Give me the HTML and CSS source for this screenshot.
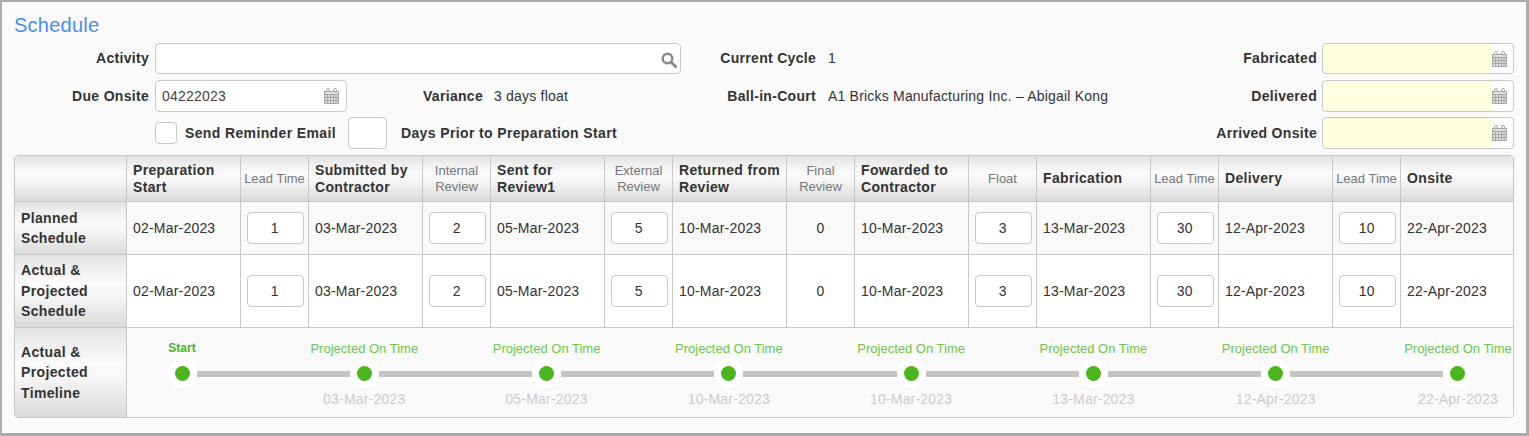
FILE: index.html
```html
<!DOCTYPE html>
<html lang="en">
<head>
    <meta charset="UTF-8">
    <meta name="viewport" content="width=device-width, initial-scale=1.0">
    <title>Schedule</title>
    <link rel="stylesheet" href="styles.css">
</head>
<body>
    <svg class="icon-defs" width="0" height="0">
        <symbol id="calendar" viewBox="0 0 15 16">
            <path d="M2.5 3V1.8a1.4 1.4 0 0 1 2.8 0V3M9.7 3V1.8a1.4 1.4 0 0 1 2.8 0V3" fill="none" stroke="currentColor" stroke-width="1"/>
            <path d="M0 3h15v13H0z" fill="currentColor" opacity="0.35"/>
            <path d="M0.5 3.5h14v12h-14zM0.5 6.5h14M0.5 9.5h14M0.5 12.5h14M3.5 6.5v9M6.5 6.5v9M9.5 6.5v9M12 6.5v9" fill="none" stroke="currentColor" stroke-width="1"/>
        </symbol>
    </svg>

    <div class="panel">
        <h1>Schedule</h1>

        <form class="form-grid">
            <!-- Row 1 -->
            <label class="field-label first-row">Activity</label>
            <div class="input-box activity">
                <svg class="search-icon" viewBox="0 0 16 16"><circle cx="6.5" cy="6.5" r="4.8" fill="none" stroke="currentColor" stroke-width="2.4"/><path d="M10 10l4.5 4.5" stroke="currentColor" stroke-width="3" stroke-linecap="round"/></svg>
            </div>
            <label class="field-label label-wide first-row">Current Cycle</label>
            <span class="field-value first-row">1</span>
            <label class="field-label label-tight first-row">Fabricated</label>
            <div class="input-box date-pending first-box"><svg class="cal-icon"><use href="#calendar"/></svg></div>

            <!-- Row 2 -->
            <label class="field-label">Due Onsite</label>
            <div class="input-box">
                <span class="input-text">04222023</span>
                <svg class="cal-icon"><use href="#calendar"/></svg>
            </div>
            <label class="field-label label-mid">Variance</label>
            <span class="field-value">3 days float</span>
            <label class="field-label label-wide">Ball-in-Court</label>
            <span class="field-value">A1 Bricks Manufacturing Inc. – Abigail Kong</span>
            <label class="field-label label-tight">Delivered</label>
            <div class="input-box date-pending"><svg class="cal-icon"><use href="#calendar"/></svg></div>

            <!-- Row 3 -->
            <div class="reminder">
                <span class="checkbox"></span>
                <label class="reminder-label">Send Reminder Email</label>
                <span class="days-box"></span>
                <label class="reminder-label">Days Prior to Preparation Start</label>
            </div>
            <label class="field-label label-tight">Arrived Onsite</label>
            <div class="input-box date-pending"><svg class="cal-icon"><use href="#calendar"/></svg></div>
        </form>

        <div class="table-wrap">
            <table class="schedule">
                <colgroup>
                    <col class="col-head">
                    <col class="col-date"><col class="col-lead">
                    <col class="col-date"><col class="col-lead">
                    <col class="col-date"><col class="col-lead">
                    <col class="col-date"><col class="col-lead">
                    <col class="col-date"><col class="col-lead">
                    <col class="col-date"><col class="col-lead">
                    <col class="col-date"><col class="col-lead">
                    <col class="col-last">
                </colgroup>
                <thead>
                    <tr>
                        <th></th>
                        <th>Preparation Start</th>
                        <th class="sub">Lead Time</th>
                        <th>Submitted by Contractor</th>
                        <th class="sub">Internal Review</th>
                        <th>Sent for Review1</th>
                        <th class="sub">External Review</th>
                        <th>Returned from Review</th>
                        <th class="sub">Final Review</th>
                        <th>Fowarded to Contractor</th>
                        <th class="sub">Float</th>
                        <th>Fabrication</th>
                        <th class="sub">Lead Time</th>
                        <th>Delivery</th>
                        <th class="sub">Lead Time</th>
                        <th>Onsite</th>
                    </tr>
                </thead>
                <tbody>
                    <tr class="row-planned">
                        <th class="row-head">Planned Schedule</th>
                        <td>02-Mar-2023</td>
                        <td class="num"><span class="num-box">1</span></td>
                        <td>03-Mar-2023</td>
                        <td class="num"><span class="num-box">2</span></td>
                        <td>05-Mar-2023</td>
                        <td class="num"><span class="num-box">5</span></td>
                        <td>10-Mar-2023</td>
                        <td class="num">0</td>
                        <td>10-Mar-2023</td>
                        <td class="num"><span class="num-box">3</span></td>
                        <td>13-Mar-2023</td>
                        <td class="num"><span class="num-box">30</span></td>
                        <td>12-Apr-2023</td>
                        <td class="num"><span class="num-box">10</span></td>
                        <td>22-Apr-2023</td>
                    </tr>
                    <tr class="row-actual">
                        <th class="row-head">Actual &amp; Projected Schedule</th>
                        <td>02-Mar-2023</td>
                        <td class="num"><span class="num-box">1</span></td>
                        <td>03-Mar-2023</td>
                        <td class="num"><span class="num-box">2</span></td>
                        <td>05-Mar-2023</td>
                        <td class="num"><span class="num-box">5</span></td>
                        <td>10-Mar-2023</td>
                        <td class="num">0</td>
                        <td>10-Mar-2023</td>
                        <td class="num"><span class="num-box">3</span></td>
                        <td>13-Mar-2023</td>
                        <td class="num"><span class="num-box">30</span></td>
                        <td>12-Apr-2023</td>
                        <td class="num"><span class="num-box">10</span></td>
                        <td>22-Apr-2023</td>
                    </tr>
                    <tr class="row-timeline">
                        <th class="row-head">Actual &amp; Projected Timeline</th>
                        <td colspan="15" class="timeline-cell">
                            <div class="timeline">
                                <div class="stop">
                                    <span class="stop-label start">Start</span>
                                    <span class="stop-dot"><i></i></span>
                                    <span class="stop-date"></span>
                                </div>
                                <div class="stop">
                                    <span class="stop-label">Projected On Time</span>
                                    <span class="stop-dot"><i></i></span>
                                    <span class="stop-date">03-Mar-2023</span>
                                </div>
                                <div class="stop">
                                    <span class="stop-label">Projected On Time</span>
                                    <span class="stop-dot"><i></i></span>
                                    <span class="stop-date">05-Mar-2023</span>
                                </div>
                                <div class="stop">
                                    <span class="stop-label">Projected On Time</span>
                                    <span class="stop-dot"><i></i></span>
                                    <span class="stop-date">10-Mar-2023</span>
                                </div>
                                <div class="stop">
                                    <span class="stop-label">Projected On Time</span>
                                    <span class="stop-dot"><i></i></span>
                                    <span class="stop-date">10-Mar-2023</span>
                                </div>
                                <div class="stop">
                                    <span class="stop-label">Projected On Time</span>
                                    <span class="stop-dot"><i></i></span>
                                    <span class="stop-date">13-Mar-2023</span>
                                </div>
                                <div class="stop">
                                    <span class="stop-label">Projected On Time</span>
                                    <span class="stop-dot"><i></i></span>
                                    <span class="stop-date">12-Apr-2023</span>
                                </div>
                                <div class="stop">
                                    <span class="stop-label">Projected On Time</span>
                                    <span class="stop-dot"><i></i></span>
                                    <span class="stop-date">22-Apr-2023</span>
                                </div>
                            </div>
                        </td>
                    </tr>
                </tbody>
            </table>
        </div>
    </div>
</body>
</html>
```

FILE: styles.css
```css
* {
    box-sizing: border-box;
}

html, body {
    margin: 0;
    padding: 0;
}

body {
    font-family: "Liberation Sans", Arial, sans-serif;
    font-size: 14px;
    letter-spacing: 0.2px;
    color: #333;
    overflow: hidden;
}

.icon-defs {
    position: absolute;
}

.panel {
    height: 436px;
    background-color: #fafafa;
    border: solid #ababab;
    border-width: 2px 3px 3px 2px;
    padding: 0 12px;
}

h1 {
    margin: 0;
    height: 41px;
    padding-top: 12px;
    font-size: 20px;
    line-height: 23px;
    font-weight: normal;
    letter-spacing: 0.25px;
    color: #4a8ef5;
}

/* top form */
.form-grid {
    display: grid;
    grid-template-columns: 141px 192px 147px 187px 147px 1fr 114px 192px;
    grid-template-rows: 32px 32px 32px;
    row-gap: 5px;
    align-items: center;
}

.field-label {
    font-weight: bold;
    letter-spacing: 0.3px;
    text-align: right;
    padding-right: 6px;
    white-space: nowrap;
}

.label-mid { padding-right: 11px; }
.label-wide { padding-right: 12px; }
.label-tight { padding-right: 5px; }

.first-row {
    margin-top: -2px;
}

.field-value {
    white-space: nowrap;
}

.input-box {
    position: relative;
    height: 32px;
    background-color: #fff;
    border: 1px solid #c8c8c8;
    border-radius: 4px;
    display: flex;
    align-items: center;
    padding-left: 6px;
    color: #444;
}

.activity {
    grid-column: span 3;
    height: 31px;
    align-self: start;
}

.first-box {
    height: 31px;
    align-self: start;
}

.date-pending {
    background: linear-gradient(to right, #ffffe0 169px, #fff 169px);
    background-clip: padding-box;
}

.search-icon {
    position: absolute;
    right: 3px;
    top: 8px;
    width: 16px;
    height: 16px;
    color: #8a8a8a;
}

.cal-icon {
    position: absolute;
    right: 7px;
    top: 7px;
    width: 15px;
    height: 16px;
    color: #a6a6a6;
}

.date-pending .cal-icon {
    right: 6px;
}

.input-text {
    line-height: 1;
}

.reminder {
    grid-column: 2 / span 5;
    display: flex;
    align-items: center;
}

.checkbox {
    width: 22px;
    height: 22px;
    background-color: #fff;
    border: 1px solid #c8c8c8;
    border-radius: 4px;
    margin-right: 8px;
}

.reminder-label {
    font-weight: bold;
    letter-spacing: 0.37px;
}

.days-box {
    width: 39px;
    height: 32px;
    background-color: #fff;
    border: 1px solid #c8c8c8;
    border-radius: 4px;
    margin: 0 14px 0 12px;
}

/* schedule table */
.table-wrap {
    margin-top: 6px;
    border: 1px solid #c8c8c8;
    border-radius: 4px;
    overflow: hidden;
}

.schedule {
    width: 1498px;
    table-layout: fixed;
    border-collapse: separate;
    border-spacing: 0;
}

.col-head { width: 112px; }
.col-date { width: 114px; }
.col-lead { width: 68px; }
.col-last { width: 112px; }

.schedule th,
.schedule td {
    padding: 0 6px;
    border-right: 1px solid #c8c8c8;
    border-bottom: 1px solid #c8c8c8;
    text-align: left;
    vertical-align: middle;
}

.schedule tr > :last-child {
    border-right: none;
}

.schedule tbody tr:last-child > * {
    border-bottom: none;
}

.schedule thead th,
.schedule .row-head {
    background: linear-gradient(to bottom, #e3e3e3 0%, #fbfbfb 40%, #f6f6f6 55%, #dadada 100%);
    font-weight: bold;
    letter-spacing: 0.35px;
    color: #333;
}

.schedule thead th {
    height: 46px;
    line-height: 17px;
}

.schedule thead th.sub {
    font-size: 13px;
    font-weight: normal;
    letter-spacing: 0;
    color: #777;
    text-align: center;
    line-height: 16px;
    padding: 0;
}

.schedule .row-head {
    line-height: 20.5px;
}

.row-planned > * {
    height: 53px;
    background-color: #f9f9f9;
}

.row-actual > * {
    height: 73px;
    background-color: #fff;
}

.row-timeline > * {
    height: 89px;
    background-color: #f9f9f9;
}

.schedule td.num {
    text-align: center;
    padding: 0;
}

.num-box {
    display: block;
    width: 56.5px;
    height: 32px;
    line-height: 30px;
    margin: 0 auto 0 6px;
    padding-right: 1px;
    background-color: #fff;
    border: 1px solid #c8c8c8;
    border-radius: 4px;
}

/* timeline */
.schedule td.timeline-cell {
    padding: 0 1px;
    vertical-align: top;
}

.timeline {
    display: flex;
    justify-content: space-between;
    padding-top: 12px;
}

.stop {
    width: 108px;
    display: flex;
    flex-direction: column;
    align-items: center;
}

.stop-label {
    font-size: 13px;
    letter-spacing: 0;
    line-height: 17px;
    white-space: nowrap;
    color: #6cc84a;
}

.stop-label.start {
    font-size: 12px;
    font-weight: bold;
    color: #4cb51c;
}

.stop-dot {
    position: relative;
    width: 29px;
    height: 29px;
    margin-top: 2px;
    border-radius: 50%;
    background-color: #fff;
    display: flex;
    align-items: center;
    justify-content: center;
}

.stop-dot i {
    width: 15px;
    height: 15px;
    border-radius: 50%;
    background-color: #4cb51c;
}

.stop:not(:last-child) .stop-dot::after {
    content: "";
    position: absolute;
    left: 100%;
    top: 12px;
    width: 153.3px;
    height: 6px;
    background-color: #c4c4c4;
}

.stop-date {
    margin-top: 1px;
    line-height: 20px;
    color: #ccc;
    white-space: nowrap;
}
```
